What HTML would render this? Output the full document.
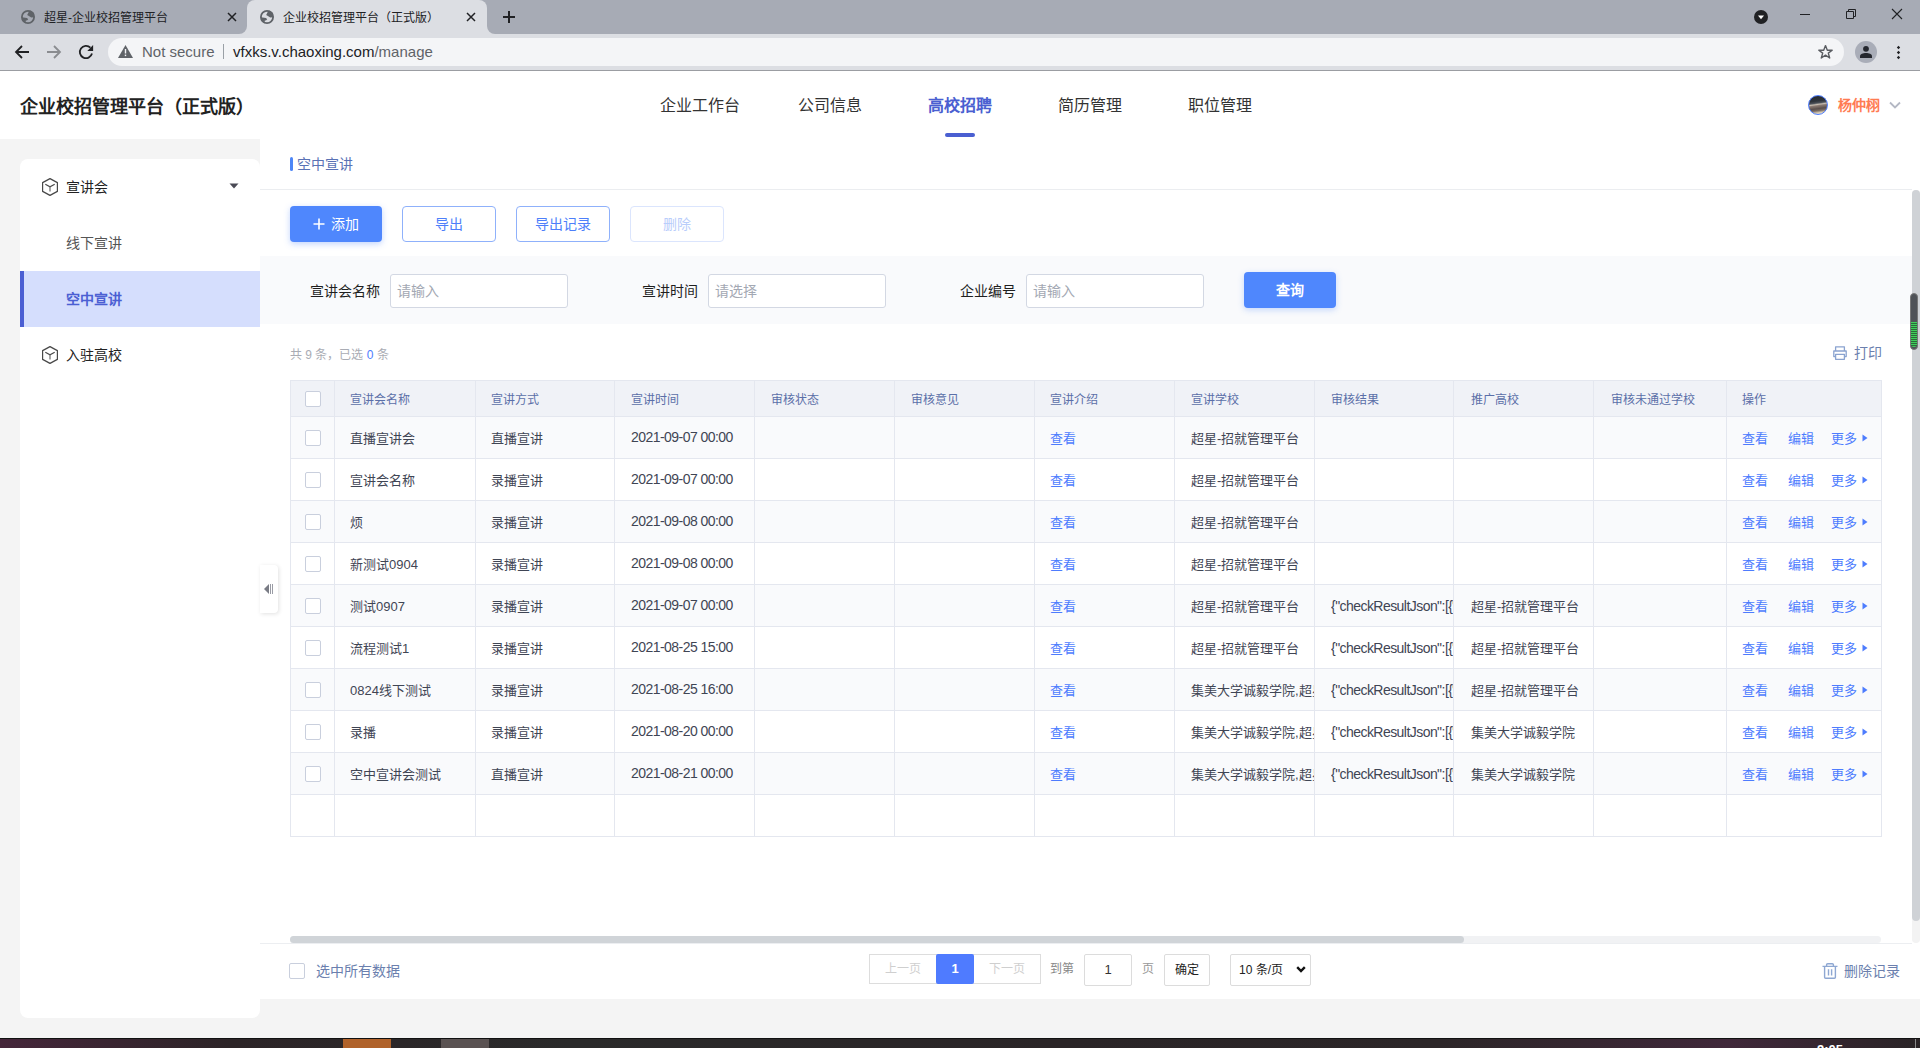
<!DOCTYPE html>
<html lang="zh-CN"><head><meta charset="utf-8"><title>企业校招管理平台（正式版）</title>
<style>
*{margin:0;padding:0;box-sizing:border-box}
html,body{width:1920px;height:1048px;overflow:hidden;background:#f4f4f4;font-family:"Liberation Sans",sans-serif;color:#333}
.abs{position:absolute}
.t{position:absolute;white-space:nowrap}
</style></head><body>

<div class="abs" style="left:0;top:0;width:1920px;height:34px;background:#a7abb5"></div>
<div class="abs" style="left:247px;top:0;width:240px;height:34px;background:#dcdee3;border-radius:8px 8px 0 0"></div>
<div class="abs" style="left:239px;top:26px;width:8px;height:8px;background:#dcdee3"></div>
<div class="abs" style="left:231px;top:18px;width:16px;height:16px;background:#a7abb5;border-radius:0 0 8px 0"></div>
<div class="abs" style="left:487px;top:26px;width:8px;height:8px;background:#dcdee3"></div>
<div class="abs" style="left:487px;top:18px;width:16px;height:16px;background:#a7abb5;border-radius:0 0 0 8px"></div>
<svg class="abs" style="left:21px;top:10px" width="14" height="14" viewBox="0 0 14 14"><circle cx="7" cy="7" r="6.1" fill="#a7abb5" stroke="#5f6368" stroke-width="1.8"/><path d="M8.3 0.8L6.2 4.9L8.7 6.6L10.2 7.6L13.2 7.2L13 3L10 0.8Z" fill="#5f6368"/><path d="M0.8 7.2L6 7.9L7.2 9.3L6.2 10.2L4.7 10.8L4.5 13.2L1.5 11Z" fill="#5f6368"/></svg>
<div class="t" style="left:44px;top:10px;font-size:12px;line-height:16px;color:#202124">超星-企业校招管理平台</div>
<svg class="abs" style="left:227px;top:12px" width="10" height="10" viewBox="0 0 10 10"><path d="M1 1L9 9M9 1L1 9" stroke="#202124" stroke-width="1.5"/></svg>
<svg class="abs" style="left:260px;top:10px" width="14" height="14" viewBox="0 0 14 14"><circle cx="7" cy="7" r="6.1" fill="#dcdee3" stroke="#5f6368" stroke-width="1.8"/><path d="M8.3 0.8L6.2 4.9L8.7 6.6L10.2 7.6L13.2 7.2L13 3L10 0.8Z" fill="#5f6368"/><path d="M0.8 7.2L6 7.9L7.2 9.3L6.2 10.2L4.7 10.8L4.5 13.2L1.5 11Z" fill="#5f6368"/></svg>
<div class="t" style="left:283px;top:10px;font-size:12px;line-height:16px;color:#202124">企业校招管理平台（正式版）</div>
<svg class="abs" style="left:466px;top:12px" width="10" height="10" viewBox="0 0 10 10"><path d="M1 1L9 9M9 1L1 9" stroke="#202124" stroke-width="1.5"/></svg>
<svg class="abs" style="left:502px;top:10px" width="14" height="14" viewBox="0 0 14 14"><path d="M7 1V13M1 7H13" stroke="#202124" stroke-width="2"/></svg>
<svg class="abs" style="left:1753px;top:9px" width="16" height="16" viewBox="0 0 16 16"><circle cx="8" cy="8" r="7" fill="#202124"/><path d="M5 6.6H11L8 10.2Z" fill="#fff"/></svg>
<div class="abs" style="left:1800px;top:14px;width:10px;height:1px;background:#202124"></div>
<svg class="abs" style="left:1845px;top:8px" width="12" height="12" viewBox="0 0 12 12"><path d="M1.5 3.5H8.5V10.5H1.5Z M3.5 3.5V1.5H10.5V8.5H8.5" stroke="#202124" stroke-width="1" fill="none"/></svg>
<svg class="abs" style="left:1891px;top:8px" width="12" height="12" viewBox="0 0 12 12"><path d="M1 1L11 11M11 1L1 11" stroke="#202124" stroke-width="1.1"/></svg>
<div class="abs" style="left:0;top:34px;width:1920px;height:36px;background:#dcdee3"></div>
<div class="abs" style="left:0;top:70px;width:1920px;height:1px;background:#9b9da2"></div>
<svg class="abs" style="left:14px;top:44px" width="16" height="16" viewBox="0 0 16 16"><path d="M15 8H2M8 2L2 8L8 14" stroke="#202124" stroke-width="1.8" fill="none"/></svg>
<svg class="abs" style="left:46px;top:44px" width="16" height="16" viewBox="0 0 16 16"><path d="M1 8H14M8 2L14 8L8 14" stroke="#8a8c90" stroke-width="1.8" fill="none"/></svg>
<svg class="abs" style="left:78px;top:44px" width="16" height="16" viewBox="0 0 16 16"><path d="M14 9.6A6.2 6.2 0 1 1 12.4 3.6" stroke="#202124" stroke-width="1.8" fill="none"/><path d="M9.3 7L15.1 1.1V7Z" fill="#202124"/></svg>
<div class="abs" style="left:108px;top:38px;width:1736px;height:28px;background:#f4f5f7;border-radius:14px"></div>
<svg class="abs" style="left:118px;top:45px" width="15" height="13" viewBox="0 0 15 13"><path d="M7.5 0L15 13H0Z" fill="#5f6368"/><rect x="6.8" y="4" width="1.4" height="4.5" fill="#f4f5f7"/><rect x="6.8" y="9.6" width="1.4" height="1.5" fill="#f4f5f7"/></svg>
<div class="t" style="left:142px;top:43px;font-size:15px;line-height:18px;color:#5f6368">Not secure</div>
<div class="abs" style="left:223px;top:44px;width:1px;height:15px;background:#9aa0a6"></div>
<div class="t" style="left:233px;top:43px;font-size:15px;line-height:18px;color:#202124">vfxks.v.chaoxing.com<span style="color:#5f6368">/manage</span></div>
<svg class="abs" style="left:1817px;top:44px" width="17" height="16" viewBox="0 0 17 16"><path d="M8.5 1.6L10.3 6.2H15.2L11.3 9.1L12.7 14L8.5 11.1L4.3 14L5.7 9.1L1.8 6.2H6.7Z" stroke="#5a5d62" stroke-width="1.4" fill="none" stroke-linejoin="round"/></svg>
<svg class="abs" style="left:1855px;top:41px" width="22" height="22" viewBox="0 0 22 22"><circle cx="11" cy="11" r="11" fill="#a9adb8"/><circle cx="11" cy="7.8" r="2.9" fill="#24272e"/><path d="M5 17V15.2C5 13.2 8 12 11 12S17 13.2 17 15.2V17Z" fill="#24272e"/></svg>
<svg class="abs" style="left:1896px;top:45px" width="5" height="15" viewBox="0 0 5 15"><path d="M2.5 0.8L4.2 2.5L2.5 4.2L0.8 2.5Z M2.5 5.8L4.2 7.5L2.5 9.2L0.8 7.5Z M2.5 10.8L4.2 12.5L2.5 14.2L0.8 12.5Z" fill="#202124"/></svg>
<div class="abs" style="left:0;top:71px;width:1920px;height:68px;background:#fff"></div>
<div class="t" style="left:20px;top:96px;font-size:18px;line-height:22px;font-weight:bold;color:#222">企业校招管理平台（正式版）</div>
<div class="t" style="left:640px;top:95px;width:120px;text-align:center;font-size:16px;line-height:22px;color:#333;font-weight:normal">企业工作台</div>
<div class="t" style="left:770px;top:95px;width:120px;text-align:center;font-size:16px;line-height:22px;color:#333;font-weight:normal">公司信息</div>
<div class="t" style="left:900px;top:95px;width:120px;text-align:center;font-size:16px;line-height:22px;color:#4a5fd1;font-weight:bold">高校招聘</div>
<div class="t" style="left:1030px;top:95px;width:120px;text-align:center;font-size:16px;line-height:22px;color:#333;font-weight:normal">简历管理</div>
<div class="t" style="left:1160px;top:95px;width:120px;text-align:center;font-size:16px;line-height:22px;color:#333;font-weight:normal">职位管理</div>
<div class="abs" style="left:945px;top:133px;width:30px;height:4px;background:#4a5fd1;border-radius:2px"></div>
<div class="abs" style="left:1808px;top:95px;width:20px;height:20px;border-radius:50%;border:1px solid #4d7cfe;background:linear-gradient(172deg,#25282f 0%,#2f343b 30%,#4b5058 40%,#c6bcb0 47%,#8a7a72 53%,#5a4f4c 68%,#7b6e66 78%,#d8ccb4 88%,#f0ece4 100%)"></div>
<div class="t" style="left:1838px;top:95px;font-size:14px;line-height:20px;font-weight:bold;color:#ff7b52">杨仲栩</div>
<svg class="abs" style="left:1889px;top:101px" width="12" height="8" viewBox="0 0 12 8"><path d="M1 1.5L6 6.5L11 1.5" stroke="#b4b8c4" stroke-width="1.8" fill="none"/></svg>
<div class="abs" style="left:20px;top:159px;width:240px;height:859px;background:#fff;border-radius:8px"></div>
<svg class="abs" style="left:42px;top:178px" width="16" height="18" viewBox="0 0 16 18"><path d="M8 0.6L15.4 4.6V13.4L8 17.4L0.6 13.4V4.6Z" stroke="#484848" stroke-width="1.2" fill="none" stroke-linejoin="round"/><path d="M3.3 6.3L8 8.8L12.7 6.3" stroke="#484848" stroke-width="1.2" fill="none"/><path d="M8 8.8V13.6" stroke="#777" stroke-width="1.3" fill="none"/></svg>
<div class="t" style="left:66px;top:177px;font-size:14px;line-height:20px;color:#222">宣讲会</div>
<svg class="abs" style="left:229px;top:183px" width="10" height="6" viewBox="0 0 10 6"><path d="M0.5 0.5H9.5L5 5.5Z" fill="#4a4a55"/></svg>
<div class="t" style="left:66px;top:233px;font-size:14px;line-height:20px;color:#555">线下宣讲</div>
<div class="abs" style="left:20px;top:271px;width:240px;height:56px;background:#d5defd"></div>
<div class="abs" style="left:20px;top:271px;width:4px;height:56px;background:#4b5fd3"></div>
<div class="t" style="left:66px;top:289px;font-size:14px;line-height:20px;color:#4b5fd3;font-weight:bold">空中宣讲</div>
<svg class="abs" style="left:42px;top:346px" width="16" height="18" viewBox="0 0 16 18"><path d="M8 0.6L15.4 4.6V13.4L8 17.4L0.6 13.4V4.6Z" stroke="#484848" stroke-width="1.2" fill="none" stroke-linejoin="round"/><path d="M3.3 6.3L8 8.8L12.7 6.3" stroke="#484848" stroke-width="1.2" fill="none"/><path d="M8 8.8V13.6" stroke="#777" stroke-width="1.3" fill="none"/></svg>
<div class="t" style="left:66px;top:345px;font-size:14px;line-height:20px;color:#222">入驻高校</div>
<div class="abs" style="left:260px;top:139px;width:1660px;height:860px;background:#fff"></div>
<div class="abs" style="left:290px;top:157px;width:3px;height:14px;background:#4d86f7;border-radius:2px"></div>
<div class="t" style="left:297px;top:154px;font-size:14px;line-height:20px;color:#5a72b5">空中宣讲</div>
<div class="abs" style="left:260px;top:189px;width:1652px;height:1px;background:#ebedf0"></div>
<div class="abs" style="left:290px;top:206px;width:92px;height:36px;background:#4f87fd;border-radius:4px;box-shadow:0 2px 6px rgba(79,135,253,0.35)"></div>
<svg class="abs" style="left:313px;top:218px" width="12" height="12" viewBox="0 0 12 12"><path d="M6 0.5V11.5M0.5 6H11.5" stroke="#fff" stroke-width="1.6"/></svg>
<div class="t" style="left:331px;top:214px;font-size:14px;line-height:20px;color:#fff">添加</div>
<div class="abs" style="left:402px;top:206px;width:94px;height:36px;border:1px solid #8fb1fb;border-radius:4px"></div>
<div class="t" style="left:402px;top:214px;width:94px;text-align:center;font-size:14px;line-height:20px;color:#4d7ffa">导出</div>
<div class="abs" style="left:516px;top:206px;width:94px;height:36px;border:1px solid #8fb1fb;border-radius:4px"></div>
<div class="t" style="left:516px;top:214px;width:94px;text-align:center;font-size:14px;line-height:20px;color:#4d7ffa">导出记录</div>
<div class="abs" style="left:630px;top:206px;width:94px;height:36px;border:1px solid #dbe5fd;border-radius:4px"></div>
<div class="t" style="left:630px;top:214px;width:94px;text-align:center;font-size:14px;line-height:20px;color:#b9cdfb">删除</div>
<div class="abs" style="left:260px;top:256px;width:1652px;height:68px;background:#f9fafc"></div>
<div class="t" style="left:310px;top:281px;font-size:14px;line-height:20px;color:#1f1f1f">宣讲会名称</div>
<div class="abs" style="left:390px;top:274px;width:178px;height:34px;background:#fff;border:1px solid #d3d8e3;border-radius:3px"></div>
<div class="t" style="left:397px;top:281px;font-size:14px;line-height:20px;color:#a3a8b3">请输入</div>
<div class="t" style="left:642px;top:281px;font-size:14px;line-height:20px;color:#1f1f1f">宣讲时间</div>
<div class="abs" style="left:708px;top:274px;width:178px;height:34px;background:#fff;border:1px solid #d3d8e3;border-radius:3px"></div>
<div class="t" style="left:715px;top:281px;font-size:14px;line-height:20px;color:#a3a8b3">请选择</div>
<div class="t" style="left:960px;top:281px;font-size:14px;line-height:20px;color:#1f1f1f">企业编号</div>
<div class="abs" style="left:1026px;top:274px;width:178px;height:34px;background:#fff;border:1px solid #d3d8e3;border-radius:3px"></div>
<div class="t" style="left:1033px;top:281px;font-size:14px;line-height:20px;color:#a3a8b3">请输入</div>
<div class="abs" style="left:1244px;top:272px;width:92px;height:36px;background:#4f87fd;border-radius:4px;box-shadow:0 2px 6px rgba(79,135,253,0.3)"></div>
<div class="t" style="left:1244px;top:280px;width:92px;text-align:center;font-size:14px;line-height:20px;color:#fff;font-weight:bold">查询</div>
<div class="t" style="left:290px;top:346px;font-size:12px;line-height:18px;color:#a9acb4">共 9 条，已选 <span style="color:#4d7cfe">0</span> 条</div>
<svg class="abs" style="left:1833px;top:346px" width="14" height="14" viewBox="0 0 14 14"><path d="M2.6 5V0.8H11.4V5M2.6 10.6H0.8V5H13.2V10.6H11.4M2.6 8.4H11.4V13.3H2.6Z" stroke="#8aa3d0" stroke-width="1.3" fill="none" stroke-linejoin="round"/></svg>
<div class="t" style="left:1854px;top:343px;font-size:14px;line-height:20px;color:#6b7fae">打印</div>
<div class="abs" style="left:290px;top:380px;width:1592px;height:37px;background:#f0f2f7"></div>
<div class="abs" style="left:290px;top:416px;width:1592px;height:42px;background:#f9fafc"></div>
<div class="abs" style="left:290px;top:458px;width:1592px;height:42px;background:#fff"></div>
<div class="abs" style="left:290px;top:500px;width:1592px;height:42px;background:#f9fafc"></div>
<div class="abs" style="left:290px;top:542px;width:1592px;height:42px;background:#fff"></div>
<div class="abs" style="left:290px;top:584px;width:1592px;height:42px;background:#f9fafc"></div>
<div class="abs" style="left:290px;top:626px;width:1592px;height:42px;background:#fff"></div>
<div class="abs" style="left:290px;top:668px;width:1592px;height:42px;background:#f9fafc"></div>
<div class="abs" style="left:290px;top:710px;width:1592px;height:42px;background:#fff"></div>
<div class="abs" style="left:290px;top:752px;width:1592px;height:42px;background:#f9fafc"></div>
<div class="abs" style="left:290px;top:794px;width:1592px;height:42px;background:#fff"></div>
<div class="abs" style="left:290px;top:380px;width:1592px;height:1px;background:#e4e7ef"></div>
<div class="abs" style="left:290px;top:416px;width:1592px;height:1px;background:#e4e7ef"></div>
<div class="abs" style="left:290px;top:458px;width:1592px;height:1px;background:#e4e7ef"></div>
<div class="abs" style="left:290px;top:500px;width:1592px;height:1px;background:#e4e7ef"></div>
<div class="abs" style="left:290px;top:542px;width:1592px;height:1px;background:#e4e7ef"></div>
<div class="abs" style="left:290px;top:584px;width:1592px;height:1px;background:#e4e7ef"></div>
<div class="abs" style="left:290px;top:626px;width:1592px;height:1px;background:#e4e7ef"></div>
<div class="abs" style="left:290px;top:668px;width:1592px;height:1px;background:#e4e7ef"></div>
<div class="abs" style="left:290px;top:710px;width:1592px;height:1px;background:#e4e7ef"></div>
<div class="abs" style="left:290px;top:752px;width:1592px;height:1px;background:#e4e7ef"></div>
<div class="abs" style="left:290px;top:794px;width:1592px;height:1px;background:#e4e7ef"></div>
<div class="abs" style="left:290px;top:836px;width:1592px;height:1px;background:#e4e7ef"></div>
<div class="abs" style="left:290px;top:380px;width:1px;height:457px;background:#e4e7ef"></div>
<div class="abs" style="left:334px;top:380px;width:1px;height:457px;background:#e4e7ef"></div>
<div class="abs" style="left:475px;top:380px;width:1px;height:457px;background:#e4e7ef"></div>
<div class="abs" style="left:614px;top:380px;width:1px;height:457px;background:#e4e7ef"></div>
<div class="abs" style="left:754px;top:380px;width:1px;height:457px;background:#e4e7ef"></div>
<div class="abs" style="left:894px;top:380px;width:1px;height:457px;background:#e4e7ef"></div>
<div class="abs" style="left:1034px;top:380px;width:1px;height:457px;background:#e4e7ef"></div>
<div class="abs" style="left:1174px;top:380px;width:1px;height:457px;background:#e4e7ef"></div>
<div class="abs" style="left:1314px;top:380px;width:1px;height:457px;background:#e4e7ef"></div>
<div class="abs" style="left:1453px;top:380px;width:1px;height:457px;background:#e4e7ef"></div>
<div class="abs" style="left:1593px;top:380px;width:1px;height:457px;background:#e4e7ef"></div>
<div class="abs" style="left:1726px;top:380px;width:1px;height:457px;background:#e4e7ef"></div>
<div class="abs" style="left:1881px;top:380px;width:1px;height:457px;background:#e4e7ef"></div>
<div class="t" style="left:350px;top:391px;font-size:12px;line-height:18px;color:#5b6fa8">宣讲会名称</div>
<div class="t" style="left:491px;top:391px;font-size:12px;line-height:18px;color:#5b6fa8">宣讲方式</div>
<div class="t" style="left:631px;top:391px;font-size:12px;line-height:18px;color:#5b6fa8">宣讲时间</div>
<div class="t" style="left:771px;top:391px;font-size:12px;line-height:18px;color:#5b6fa8">审核状态</div>
<div class="t" style="left:911px;top:391px;font-size:12px;line-height:18px;color:#5b6fa8">审核意见</div>
<div class="t" style="left:1050px;top:391px;font-size:12px;line-height:18px;color:#5b6fa8">宣讲介绍</div>
<div class="t" style="left:1191px;top:391px;font-size:12px;line-height:18px;color:#5b6fa8">宣讲学校</div>
<div class="t" style="left:1331px;top:391px;font-size:12px;line-height:18px;color:#5b6fa8">审核结果</div>
<div class="t" style="left:1471px;top:391px;font-size:12px;line-height:18px;color:#5b6fa8">推广高校</div>
<div class="t" style="left:1611px;top:391px;font-size:12px;line-height:18px;color:#5b6fa8">审核未通过学校</div>
<div class="t" style="left:1742px;top:391px;font-size:12px;line-height:18px;color:#5b6fa8">操作</div>
<div class="abs" style="left:305px;top:391px;width:16px;height:16px;background:#fff;border:1px solid #c9cfdd;border-radius:2px"></div>
<div class="abs" style="left:305px;top:430px;width:16px;height:16px;background:#fff;border:1px solid #c9cfdd;border-radius:2px"></div>
<div class="t" style="left:350px;top:429px;width:125px;overflow:hidden;font-size:13px;line-height:19px;color:#3f4554">直播宣讲会</div>
<div class="t" style="left:491px;top:429px;width:123px;overflow:hidden;font-size:13px;line-height:19px;color:#3f4554">直播宣讲</div>
<div class="t" style="left:631px;top:428px;width:123px;overflow:hidden;font-size:14px;letter-spacing:-0.55px;line-height:19px;color:#3f4554">2021-09-07 00:00</div>
<div class="t" style="left:1050px;top:429px;width:124px;overflow:hidden;font-size:13px;line-height:19px;color:#4d7cfe">查看</div>
<div class="t" style="left:1191px;top:429px;width:123px;overflow:hidden;font-size:13px;line-height:19px;color:#3f4554">超星-招就管理平台</div>
<div class="t" style="left:1742px;top:429px;font-size:13px;line-height:19px;color:#4d7cfe">查看</div>
<div class="t" style="left:1788px;top:429px;font-size:13px;line-height:19px;color:#4d7cfe">编辑</div>
<div class="t" style="left:1831px;top:429px;font-size:13px;line-height:19px;color:#4d7cfe">更多</div>
<svg class="abs" style="left:1862px;top:434px" width="6" height="8" viewBox="0 0 6 8"><path d="M0.5 0.5L5.5 4L0.5 7.5Z" fill="#4d7cfe"/></svg>
<div class="abs" style="left:305px;top:472px;width:16px;height:16px;background:#fff;border:1px solid #c9cfdd;border-radius:2px"></div>
<div class="t" style="left:350px;top:471px;width:125px;overflow:hidden;font-size:13px;line-height:19px;color:#3f4554">宣讲会名称</div>
<div class="t" style="left:491px;top:471px;width:123px;overflow:hidden;font-size:13px;line-height:19px;color:#3f4554">录播宣讲</div>
<div class="t" style="left:631px;top:470px;width:123px;overflow:hidden;font-size:14px;letter-spacing:-0.55px;line-height:19px;color:#3f4554">2021-09-07 00:00</div>
<div class="t" style="left:1050px;top:471px;width:124px;overflow:hidden;font-size:13px;line-height:19px;color:#4d7cfe">查看</div>
<div class="t" style="left:1191px;top:471px;width:123px;overflow:hidden;font-size:13px;line-height:19px;color:#3f4554">超星-招就管理平台</div>
<div class="t" style="left:1742px;top:471px;font-size:13px;line-height:19px;color:#4d7cfe">查看</div>
<div class="t" style="left:1788px;top:471px;font-size:13px;line-height:19px;color:#4d7cfe">编辑</div>
<div class="t" style="left:1831px;top:471px;font-size:13px;line-height:19px;color:#4d7cfe">更多</div>
<svg class="abs" style="left:1862px;top:476px" width="6" height="8" viewBox="0 0 6 8"><path d="M0.5 0.5L5.5 4L0.5 7.5Z" fill="#4d7cfe"/></svg>
<div class="abs" style="left:305px;top:514px;width:16px;height:16px;background:#fff;border:1px solid #c9cfdd;border-radius:2px"></div>
<div class="t" style="left:350px;top:513px;width:125px;overflow:hidden;font-size:13px;line-height:19px;color:#3f4554">烦</div>
<div class="t" style="left:491px;top:513px;width:123px;overflow:hidden;font-size:13px;line-height:19px;color:#3f4554">录播宣讲</div>
<div class="t" style="left:631px;top:512px;width:123px;overflow:hidden;font-size:14px;letter-spacing:-0.55px;line-height:19px;color:#3f4554">2021-09-08 00:00</div>
<div class="t" style="left:1050px;top:513px;width:124px;overflow:hidden;font-size:13px;line-height:19px;color:#4d7cfe">查看</div>
<div class="t" style="left:1191px;top:513px;width:123px;overflow:hidden;font-size:13px;line-height:19px;color:#3f4554">超星-招就管理平台</div>
<div class="t" style="left:1742px;top:513px;font-size:13px;line-height:19px;color:#4d7cfe">查看</div>
<div class="t" style="left:1788px;top:513px;font-size:13px;line-height:19px;color:#4d7cfe">编辑</div>
<div class="t" style="left:1831px;top:513px;font-size:13px;line-height:19px;color:#4d7cfe">更多</div>
<svg class="abs" style="left:1862px;top:518px" width="6" height="8" viewBox="0 0 6 8"><path d="M0.5 0.5L5.5 4L0.5 7.5Z" fill="#4d7cfe"/></svg>
<div class="abs" style="left:305px;top:556px;width:16px;height:16px;background:#fff;border:1px solid #c9cfdd;border-radius:2px"></div>
<div class="t" style="left:350px;top:555px;width:125px;overflow:hidden;font-size:13px;line-height:19px;color:#3f4554">新测试0904</div>
<div class="t" style="left:491px;top:555px;width:123px;overflow:hidden;font-size:13px;line-height:19px;color:#3f4554">录播宣讲</div>
<div class="t" style="left:631px;top:554px;width:123px;overflow:hidden;font-size:14px;letter-spacing:-0.55px;line-height:19px;color:#3f4554">2021-09-08 00:00</div>
<div class="t" style="left:1050px;top:555px;width:124px;overflow:hidden;font-size:13px;line-height:19px;color:#4d7cfe">查看</div>
<div class="t" style="left:1191px;top:555px;width:123px;overflow:hidden;font-size:13px;line-height:19px;color:#3f4554">超星-招就管理平台</div>
<div class="t" style="left:1742px;top:555px;font-size:13px;line-height:19px;color:#4d7cfe">查看</div>
<div class="t" style="left:1788px;top:555px;font-size:13px;line-height:19px;color:#4d7cfe">编辑</div>
<div class="t" style="left:1831px;top:555px;font-size:13px;line-height:19px;color:#4d7cfe">更多</div>
<svg class="abs" style="left:1862px;top:560px" width="6" height="8" viewBox="0 0 6 8"><path d="M0.5 0.5L5.5 4L0.5 7.5Z" fill="#4d7cfe"/></svg>
<div class="abs" style="left:305px;top:598px;width:16px;height:16px;background:#fff;border:1px solid #c9cfdd;border-radius:2px"></div>
<div class="t" style="left:350px;top:597px;width:125px;overflow:hidden;font-size:13px;line-height:19px;color:#3f4554">测试0907</div>
<div class="t" style="left:491px;top:597px;width:123px;overflow:hidden;font-size:13px;line-height:19px;color:#3f4554">录播宣讲</div>
<div class="t" style="left:631px;top:596px;width:123px;overflow:hidden;font-size:14px;letter-spacing:-0.55px;line-height:19px;color:#3f4554">2021-09-07 00:00</div>
<div class="t" style="left:1050px;top:597px;width:124px;overflow:hidden;font-size:13px;line-height:19px;color:#4d7cfe">查看</div>
<div class="t" style="left:1191px;top:597px;width:123px;overflow:hidden;font-size:13px;line-height:19px;color:#3f4554">超星-招就管理平台</div>
<div class="t" style="left:1331px;top:597px;width:122px;overflow:hidden;font-size:14px;letter-spacing:-0.55px;line-height:19px;color:#3f4554">{"checkResultJson":[{"schoolId":1}]}</div>
<div class="t" style="left:1471px;top:597px;width:122px;overflow:hidden;font-size:13px;line-height:19px;color:#3f4554">超星-招就管理平台</div>
<div class="t" style="left:1742px;top:597px;font-size:13px;line-height:19px;color:#4d7cfe">查看</div>
<div class="t" style="left:1788px;top:597px;font-size:13px;line-height:19px;color:#4d7cfe">编辑</div>
<div class="t" style="left:1831px;top:597px;font-size:13px;line-height:19px;color:#4d7cfe">更多</div>
<svg class="abs" style="left:1862px;top:602px" width="6" height="8" viewBox="0 0 6 8"><path d="M0.5 0.5L5.5 4L0.5 7.5Z" fill="#4d7cfe"/></svg>
<div class="abs" style="left:305px;top:640px;width:16px;height:16px;background:#fff;border:1px solid #c9cfdd;border-radius:2px"></div>
<div class="t" style="left:350px;top:639px;width:125px;overflow:hidden;font-size:13px;line-height:19px;color:#3f4554">流程测试1</div>
<div class="t" style="left:491px;top:639px;width:123px;overflow:hidden;font-size:13px;line-height:19px;color:#3f4554">录播宣讲</div>
<div class="t" style="left:631px;top:638px;width:123px;overflow:hidden;font-size:14px;letter-spacing:-0.55px;line-height:19px;color:#3f4554">2021-08-25 15:00</div>
<div class="t" style="left:1050px;top:639px;width:124px;overflow:hidden;font-size:13px;line-height:19px;color:#4d7cfe">查看</div>
<div class="t" style="left:1191px;top:639px;width:123px;overflow:hidden;font-size:13px;line-height:19px;color:#3f4554">超星-招就管理平台</div>
<div class="t" style="left:1331px;top:639px;width:122px;overflow:hidden;font-size:14px;letter-spacing:-0.55px;line-height:19px;color:#3f4554">{"checkResultJson":[{"schoolId":1}]}</div>
<div class="t" style="left:1471px;top:639px;width:122px;overflow:hidden;font-size:13px;line-height:19px;color:#3f4554">超星-招就管理平台</div>
<div class="t" style="left:1742px;top:639px;font-size:13px;line-height:19px;color:#4d7cfe">查看</div>
<div class="t" style="left:1788px;top:639px;font-size:13px;line-height:19px;color:#4d7cfe">编辑</div>
<div class="t" style="left:1831px;top:639px;font-size:13px;line-height:19px;color:#4d7cfe">更多</div>
<svg class="abs" style="left:1862px;top:644px" width="6" height="8" viewBox="0 0 6 8"><path d="M0.5 0.5L5.5 4L0.5 7.5Z" fill="#4d7cfe"/></svg>
<div class="abs" style="left:305px;top:682px;width:16px;height:16px;background:#fff;border:1px solid #c9cfdd;border-radius:2px"></div>
<div class="t" style="left:350px;top:681px;width:125px;overflow:hidden;font-size:13px;line-height:19px;color:#3f4554">0824线下测试</div>
<div class="t" style="left:491px;top:681px;width:123px;overflow:hidden;font-size:13px;line-height:19px;color:#3f4554">录播宣讲</div>
<div class="t" style="left:631px;top:680px;width:123px;overflow:hidden;font-size:14px;letter-spacing:-0.55px;line-height:19px;color:#3f4554">2021-08-25 16:00</div>
<div class="t" style="left:1050px;top:681px;width:124px;overflow:hidden;font-size:13px;line-height:19px;color:#4d7cfe">查看</div>
<div class="t" style="left:1191px;top:681px;width:123px;overflow:hidden;font-size:13px;line-height:19px;color:#3f4554">集美大学诚毅学院,超星-招就管理平台</div>
<div class="t" style="left:1331px;top:681px;width:122px;overflow:hidden;font-size:14px;letter-spacing:-0.55px;line-height:19px;color:#3f4554">{"checkResultJson":[{"schoolId":1}]}</div>
<div class="t" style="left:1471px;top:681px;width:122px;overflow:hidden;font-size:13px;line-height:19px;color:#3f4554">超星-招就管理平台</div>
<div class="t" style="left:1742px;top:681px;font-size:13px;line-height:19px;color:#4d7cfe">查看</div>
<div class="t" style="left:1788px;top:681px;font-size:13px;line-height:19px;color:#4d7cfe">编辑</div>
<div class="t" style="left:1831px;top:681px;font-size:13px;line-height:19px;color:#4d7cfe">更多</div>
<svg class="abs" style="left:1862px;top:686px" width="6" height="8" viewBox="0 0 6 8"><path d="M0.5 0.5L5.5 4L0.5 7.5Z" fill="#4d7cfe"/></svg>
<div class="abs" style="left:305px;top:724px;width:16px;height:16px;background:#fff;border:1px solid #c9cfdd;border-radius:2px"></div>
<div class="t" style="left:350px;top:723px;width:125px;overflow:hidden;font-size:13px;line-height:19px;color:#3f4554">录播</div>
<div class="t" style="left:491px;top:723px;width:123px;overflow:hidden;font-size:13px;line-height:19px;color:#3f4554">录播宣讲</div>
<div class="t" style="left:631px;top:722px;width:123px;overflow:hidden;font-size:14px;letter-spacing:-0.55px;line-height:19px;color:#3f4554">2021-08-20 00:00</div>
<div class="t" style="left:1050px;top:723px;width:124px;overflow:hidden;font-size:13px;line-height:19px;color:#4d7cfe">查看</div>
<div class="t" style="left:1191px;top:723px;width:123px;overflow:hidden;font-size:13px;line-height:19px;color:#3f4554">集美大学诚毅学院,超星-招就管理平台</div>
<div class="t" style="left:1331px;top:723px;width:122px;overflow:hidden;font-size:14px;letter-spacing:-0.55px;line-height:19px;color:#3f4554">{"checkResultJson":[{"schoolId":1}]}</div>
<div class="t" style="left:1471px;top:723px;width:122px;overflow:hidden;font-size:13px;line-height:19px;color:#3f4554">集美大学诚毅学院</div>
<div class="t" style="left:1742px;top:723px;font-size:13px;line-height:19px;color:#4d7cfe">查看</div>
<div class="t" style="left:1788px;top:723px;font-size:13px;line-height:19px;color:#4d7cfe">编辑</div>
<div class="t" style="left:1831px;top:723px;font-size:13px;line-height:19px;color:#4d7cfe">更多</div>
<svg class="abs" style="left:1862px;top:728px" width="6" height="8" viewBox="0 0 6 8"><path d="M0.5 0.5L5.5 4L0.5 7.5Z" fill="#4d7cfe"/></svg>
<div class="abs" style="left:305px;top:766px;width:16px;height:16px;background:#fff;border:1px solid #c9cfdd;border-radius:2px"></div>
<div class="t" style="left:350px;top:765px;width:125px;overflow:hidden;font-size:13px;line-height:19px;color:#3f4554">空中宣讲会测试</div>
<div class="t" style="left:491px;top:765px;width:123px;overflow:hidden;font-size:13px;line-height:19px;color:#3f4554">直播宣讲</div>
<div class="t" style="left:631px;top:764px;width:123px;overflow:hidden;font-size:14px;letter-spacing:-0.55px;line-height:19px;color:#3f4554">2021-08-21 00:00</div>
<div class="t" style="left:1050px;top:765px;width:124px;overflow:hidden;font-size:13px;line-height:19px;color:#4d7cfe">查看</div>
<div class="t" style="left:1191px;top:765px;width:123px;overflow:hidden;font-size:13px;line-height:19px;color:#3f4554">集美大学诚毅学院,超星-招就管理平台</div>
<div class="t" style="left:1331px;top:765px;width:122px;overflow:hidden;font-size:14px;letter-spacing:-0.55px;line-height:19px;color:#3f4554">{"checkResultJson":[{"schoolId":1}]}</div>
<div class="t" style="left:1471px;top:765px;width:122px;overflow:hidden;font-size:13px;line-height:19px;color:#3f4554">集美大学诚毅学院</div>
<div class="t" style="left:1742px;top:765px;font-size:13px;line-height:19px;color:#4d7cfe">查看</div>
<div class="t" style="left:1788px;top:765px;font-size:13px;line-height:19px;color:#4d7cfe">编辑</div>
<div class="t" style="left:1831px;top:765px;font-size:13px;line-height:19px;color:#4d7cfe">更多</div>
<svg class="abs" style="left:1862px;top:770px" width="6" height="8" viewBox="0 0 6 8"><path d="M0.5 0.5L5.5 4L0.5 7.5Z" fill="#4d7cfe"/></svg>
<div class="abs" style="left:260px;top:565px;width:18px;height:48px;background:#fff;border-radius:0 4px 4px 0;box-shadow:1px 1px 4px rgba(0,0,0,0.12)"></div>
<svg class="abs" style="left:264px;top:584px" width="10" height="10" viewBox="0 0 10 10"><path d="M0 5L5 0V10Z" fill="#7a7c85"/><rect x="6" y="0" width="1" height="10" fill="#9a9ca5"/><rect x="8" y="0" width="1" height="10" fill="#9a9ca5"/></svg>
<div class="abs" style="left:290px;top:936px;width:1591px;height:7px;background:#f1f2f4;border-radius:4px"></div>
<div class="abs" style="left:290px;top:936px;width:1174px;height:7px;background:#d0d4d8;border-radius:4px"></div>
<div class="abs" style="left:260px;top:943px;width:1652px;height:1px;background:#eceef1"></div>
<div class="abs" style="left:289px;top:963px;width:16px;height:16px;background:#fff;border:1px solid #c9cfdd;border-radius:2px"></div>
<div class="t" style="left:316px;top:961px;font-size:14px;line-height:20px;color:#6b7fae">选中所有数据</div>
<div class="abs" style="left:869px;top:954px;width:172px;height:30px;border:1px solid #dddddd;background:#fff"></div>
<div class="abs" style="left:936px;top:954px;width:38px;height:30px;background:#4f7bff;border-radius:2px"></div>
<div class="t" style="left:870px;top:960px;width:66px;text-align:center;font-size:12px;line-height:18px;color:#cfcfcf">上一页</div>
<div class="t" style="left:936px;top:960px;width:38px;text-align:center;font-size:13px;line-height:18px;color:#fff;font-weight:bold">1</div>
<div class="t" style="left:974px;top:960px;width:66px;text-align:center;font-size:12px;line-height:18px;color:#cfcfcf">下一页</div>
<div class="t" style="left:1050px;top:960px;font-size:12px;line-height:18px;color:#888">到第</div>
<div class="abs" style="left:1084px;top:954px;width:48px;height:32px;border:1px solid #dcdcdc;border-radius:2px;background:#fff"></div>
<div class="t" style="left:1084px;top:961px;width:48px;text-align:center;font-size:13px;line-height:18px;color:#333">1</div>
<div class="t" style="left:1142px;top:960px;font-size:12px;line-height:18px;color:#999">页</div>
<div class="abs" style="left:1164px;top:954px;width:46px;height:32px;border:1px solid #dcdcdc;border-radius:2px;background:#fff"></div>
<div class="t" style="left:1164px;top:961px;width:46px;text-align:center;font-size:12px;line-height:18px;color:#222">确定</div>
<div class="abs" style="left:1230px;top:954px;width:81px;height:32px;border:1px solid #dcdcdc;border-radius:2px;background:#fff"></div>
<div class="t" style="left:1239px;top:961px;font-size:12px;line-height:18px;color:#222">10 条/页</div>
<svg class="abs" style="left:1296px;top:966px" width="10" height="7" viewBox="0 0 10 7"><path d="M1.2 1.2L5 5L8.8 1.2" stroke="#111" stroke-width="2.4" fill="none"/></svg>
<svg class="abs" style="left:1822px;top:963px" width="16" height="16" viewBox="0 0 16 16"><path d="M0.5 3.4H15.5M4.6 3.4V1.8Q4.6 0.7 5.7 0.7H10.3Q11.4 0.7 11.4 1.8V3.4M2.6 3.4V14.3Q2.6 15.3 3.6 15.3H12.4Q13.4 15.3 13.4 14.3V3.4M6.5 6.2V12.4M9.6 6.2V12.4" stroke="#8ea7d2" stroke-width="1.4" fill="none"/></svg>
<div class="t" style="left:1844px;top:961px;font-size:14px;line-height:20px;color:#6b7fae">删除记录</div>
<div class="abs" style="left:1912px;top:190px;width:8px;height:753px;background:#f3f3f3;border-radius:4px"></div>
<div class="abs" style="left:1912px;top:190px;width:8px;height:731px;background:#cfd2d6;border-radius:4px"></div>
<div class="abs" style="left:1910px;top:293px;width:8px;height:57px;background:#4f5257;border-radius:4px;border:1px solid #777"></div>
<div class="abs" style="left:1911px;top:322px;width:6px;height:25px;background:repeating-linear-gradient(#3ecf5a 0,#3ecf5a 1px,#2b6a3a 1px,#2b6a3a 2px);border-radius:0 0 3px 3px"></div>
<div class="abs" style="left:0;top:1038px;width:1920px;height:10px;background:linear-gradient(90deg,#45263a 0%,#2c2427 12%,#2a2a2a 30%,#2a2527 55%,#2c2628 75%,#40283a 90%,#2a2426 100%)"></div>
<div class="t" style="left:1817px;top:1042px;font-size:13px;line-height:16px;color:#fff;font-weight:bold">9:05</div>
<div class="abs" style="left:1915px;top:1039px;width:1px;height:9px;background:#8a8a8a"></div>
<div class="abs" style="left:0;top:1038px;width:1920px;height:1px;background:#111"></div>
<div class="abs" style="left:343px;top:1039px;width:48px;height:9px;background:#b0622a"></div>
<div class="abs" style="left:441px;top:1039px;width:48px;height:9px;background:#5a5252"></div>
</body></html>
